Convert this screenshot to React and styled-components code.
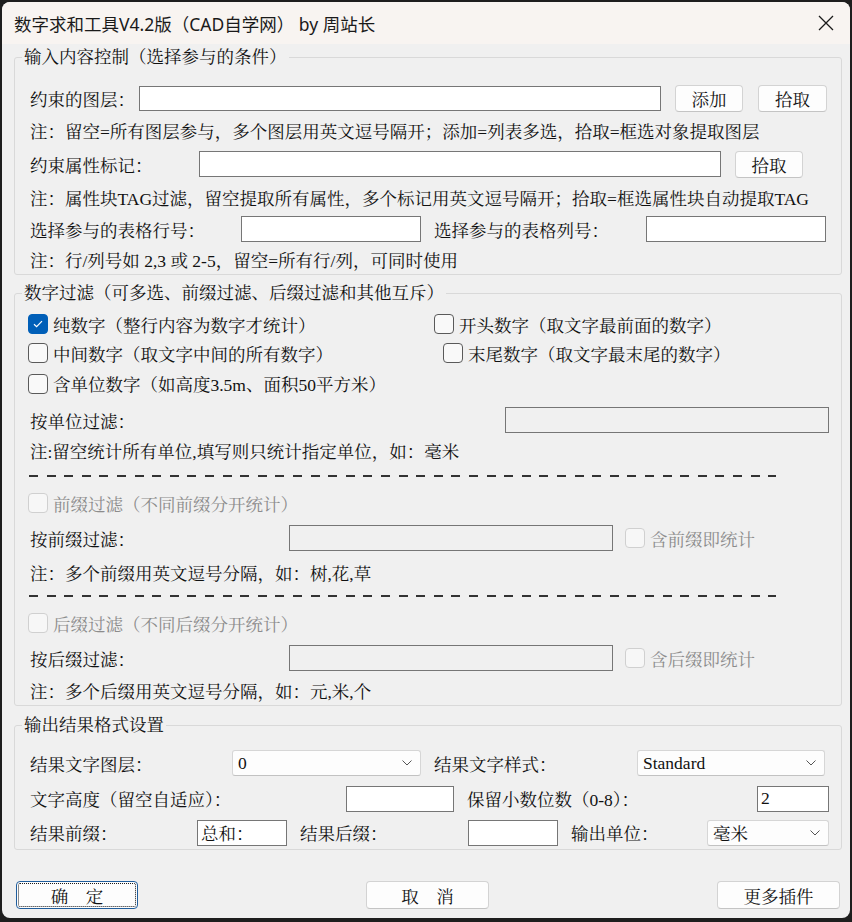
import React from 'react';
import styled, { createGlobalStyle, css } from 'styled-components';

const BODY_FONT = `"Liberation Serif", "Noto Serif CJK SC", "Noto Sans CJK SC", serif`;
const TITLE_FONT = `"Noto Sans", "Noto Sans CJK SC", sans-serif`;

const GlobalStyle = createGlobalStyle`
  html, body { margin: 0; padding: 0; background: #1e1e1e; }
  body { width: 852px; height: 922px; overflow: hidden; }
  *, *::before, *::after { box-sizing: border-box; }
`;

const Window = styled.div`
  margin: 2px;
  width: 848px;
  height: 916px;
  background: #f0f0f0;
  border-radius: 8px;
  overflow: hidden;
  display: flex;
  flex-direction: column;
  font-family: ${BODY_FONT};
  font-size: 17.5px;
  color: #111;
`;

const TitleBar = styled.div`
  flex: 0 0 42px;
  display: flex;
  align-items: center;
  justify-content: space-between;
  padding-left: 12px;
  background: #f8f4f1;
  font-family: ${TITLE_FONT};
  font-size: 17.5px;
  color: #1a1a1a;
`;

const CloseBtn = styled.div`
  width: 48px;
  height: 42px;
  display: flex;
  align-items: center;
  justify-content: center;
`;

const Group = styled.fieldset`
  margin: ${p => p.$mt}px 0 0 12px;
  width: 828px;
  min-width: 0;
  padding: 0 0 ${p => p.$pb}px 15px;
  border: 1px solid #d9d9d9;
  border-radius: 3px;
  display: flex;
  flex-direction: column;
`;

const Legend = styled.legend`
  margin-left: -8px;
  padding: 0 2px;
  line-height: 24px;
  color: #111;
`;

const Row = styled.div`
  display: flex;
  align-items: center;
  height: ${p => p.$h}px;
  margin-top: ${p => p.$mt || 0}px;
  margin-left: ${p => p.$ml || 0}px;
  white-space: nowrap;
`;

const Label = styled.span`
  flex: 0 0 ${p => (p.$w ? `${p.$w}px` : 'auto')};
  margin-left: ${p => p.$ml || 0}px;
  white-space: nowrap;
  color: ${p => (p.$disabled ? '#8c8c8c' : '#111')};
`;

const TextBox = styled.input`
  flex: 0 0 ${p => p.$w}px;
  width: ${p => p.$w}px;
  height: ${p => p.$h || 26}px;
  margin: 0;
  border: 1px solid #767676;
  border-radius: 0;
  background: ${p => (p.$muted ? '#f0f0f0' : '#fff')};
  font: inherit;
  padding: 0 3px;
  color: #111;
  outline: none;
`;

const Btn = styled.button`
  flex: 0 0 ${p => p.$w}px;
  width: ${p => p.$w}px;
  height: ${p => p.$h || 27}px;
  margin: 0 0 0 ${p => p.$ml || 0}px;
  padding: 0;
  background: #fdfdfd;
  border: 1px solid #d3d3d3;
  border-bottom-color: #c4c4c4;
  border-radius: 4px;
  font: inherit;
  color: #111;
  ${p =>
    p.$primary &&
    css`
      border-color: #1f5d9c;
      outline: 1px dotted #1a1a1a;
      outline-offset: -3px;
    `}
`;

const Combo = styled.div`
  flex: 0 0 ${p => p.$w}px;
  width: ${p => p.$w}px;
  height: 26px;
  margin-left: ${p => p.$ml || 0}px;
  display: flex;
  align-items: center;
  justify-content: space-between;
  padding: 0 8px 0 5px;
  background: #fdfdfd;
  border: 1px solid #d6d6d6;
  border-bottom-color: #c2c2c2;
  border-radius: 3px;
  color: #111;
`;

const CheckItem = styled.label`
  display: flex;
  align-items: center;
  gap: 5px;
  flex: 0 0 ${p => (p.$w ? `${p.$w}px` : 'auto')};
  margin-left: ${p => p.$ml || 0}px;
  color: ${p => (p.$disabled ? '#8c8c8c' : '#111')};
`;

const Box = styled.span`
  flex: 0 0 20px;
  width: 20px;
  height: 20px;
  border-radius: 4px;
  border: 1px solid
    ${p => (p.$checked ? '#005fb8' : p.$disabled ? '#d0d0d0' : '#5a5a5a')};
  background: ${p => (p.$checked ? '#005fb8' : p.$disabled ? '#f7f7f7' : '#f9f9f9')};
  display: flex;
  align-items: center;
  justify-content: center;
`;

const Dashes = styled.div`
  width: 747px;
  height: 2px;
  margin-left: -1px;
  background: repeating-linear-gradient(to right, #333 0 9px, transparent 9px 17.6px);
`;

const ButtonBar = styled.div`
  display: flex;
  justify-content: space-between;
  margin: 31px 10px 0 14px;
`;

const Check = ({ checked, disabled, children, w, ml }) => (
  <CheckItem $disabled={disabled} $w={w} $ml={ml}>
    <Box $checked={checked} $disabled={disabled}>
      {checked && (
        <svg width="12" height="10" viewBox="0 0 12 10">
          <polyline points="2,5.2 4.6,7.6 10,2.2" fill="none" stroke="#fff" strokeWidth="1.2" />
        </svg>
      )}
    </Box>
    <span>{children}</span>
  </CheckItem>
);

const Select = ({ w, ml, value }) => (
  <Combo $w={w} $ml={ml}>
    <span>{value}</span>
    <svg width="10" height="6" viewBox="0 0 10 6">
      <path d="M0.5 0.5 L5 5 L9.5 0.5" fill="none" stroke="#555" strokeWidth="1" />
    </svg>
  </Combo>
);

export default function App() {
  return (
    <>
      <GlobalStyle />
      <Window>
        <TitleBar>
          <span>数字求和工具V4.2版（CAD自学网） by 周站长</span>
          <CloseBtn>
            <svg width="16" height="16" viewBox="0 0 16 16">
              <path d="M1 1 L15 15 M15 1 L1 15" stroke="#1a1a1a" strokeWidth="1.3" />
            </svg>
          </CloseBtn>
        </TitleBar>

        <Group $mt={1} $pb={2}>
          <Legend>输入内容控制（选择参与的条件）</Legend>
          <Row $h={32} $mt={13}>
            <Label $w={109}>约束的图层：</Label>
            <TextBox $w={522} $h={25} readOnly />
            <Btn $w={68} $ml={14}>添加</Btn>
            <Btn $w={69} $ml={15}>拾取</Btn>
          </Row>
          <Row $h={32}>注：留空=所有图层参与，多个图层用英文逗号隔开；添加=列表多选，拾取=框选对象提取图层</Row>
          <Row $h={36}>
            <Label $w={169}>约束属性标记：</Label>
            <TextBox $w={522} readOnly />
            <Btn $w={68} $ml={14}>拾取</Btn>
          </Row>
          <Row $h={30}>注：属性块TAG过滤，留空提取所有属性，多个标记用英文逗号隔开；拾取=框选属性块自动提取TAG</Row>
          <Row $h={34}>
            <Label $w={211}>选择参与的表格行号：</Label>
            <TextBox $w={180} readOnly />
            <Label $w={212} $ml={13}>选择参与的表格列号：</Label>
            <TextBox $w={180} readOnly />
          </Row>
          <Row $h={26}>注：行/列号如 2,3 或 2-5，留空=所有行/列，可同时使用</Row>
        </Group>

        <Group $mt={6} $pb={5}>
          <Legend>数字过滤（可多选、前缀过滤、后缀过滤和其他互斥）</Legend>
          <Row $h={28} $mt={5} $ml={-2}>
            <Check checked w={406}>纯数字（整行内容为数字才统计）</Check>
            <Check>开头数字（取文字最前面的数字）</Check>
          </Row>
          <Row $h={30} $ml={-2}>
            <Check w={415}>中间数字（取文字中间的所有数字）</Check>
            <Check>末尾数字（取文字最末尾的数字）</Check>
          </Row>
          <Row $h={31} $ml={-2}>
            <Check>含单位数字（如高度3.5m、面积50平方米）</Check>
          </Row>
          <Row $h={42}>
            <Label $w={475}>按单位过滤：</Label>
            <TextBox $w={324} $muted readOnly />
          </Row>
          <Row $h={19}>注:留空统计所有单位,填写则只统计指定单位，如：毫米</Row>
          <Row $h={32}>
            <Dashes />
          </Row>
          <Row $h={22} $ml={-2}>
            <Check disabled>前缀过滤（不同前缀分开统计）</Check>
          </Row>
          <Row $h={48}>
            <Label $w={259}>按前缀过滤：</Label>
            <TextBox $w={324} $muted readOnly />
            <Check disabled ml={12}>含前缀即统计</Check>
          </Row>
          <Row $h={20}>注：多个前缀用英文逗号分隔，如：树,花,草</Row>
          <Row $h={28}>
            <Dashes />
          </Row>
          <Row $h={26} $ml={-2}>
            <Check disabled>后缀过滤（不同后缀分开统计）</Check>
          </Row>
          <Row $h={44}>
            <Label $w={259}>按后缀过滤：</Label>
            <TextBox $w={324} $muted readOnly />
            <Check disabled ml={12}>含后缀即统计</Check>
          </Row>
          <Row $h={20}>注：多个后缀用英文逗号分隔，如：元,米,个</Row>
        </Group>

        <Group $mt={7} $pb={0}>
          <Legend>输出结果格式设置</Legend>
          <Row $h={36} $mt={8}>
            <Label $w={202}>结果文字图层：</Label>
            <Select w={189} value="0" />
            <Label $w={203} $ml={13}>结果文字样式：</Label>
            <Select w={188} value="Standard" />
          </Row>
          <Row $h={35}>
            <Label $w={316}>文字高度（留空自适应）：</Label>
            <TextBox $w={108} readOnly />
            <Label $w={290} $ml={13}>保留小数位数（0-8）：</Label>
            <TextBox $w={72} readOnly defaultValue="2" />
          </Row>
          <Row $h={33}>
            <Label $w={167}>结果前缀：</Label>
            <TextBox $w={90} readOnly defaultValue="总和：" />
            <Label $w={168} $ml={13}>结果后缀：</Label>
            <TextBox $w={90} readOnly />
            <Label $w={136} $ml={13}>输出单位：</Label>
            <Select w={122} value="毫米" />
          </Row>
        </Group>

        <ButtonBar>
          <Btn $w={122} $h={28} $primary>确　定</Btn>
          <Btn $w={123} $h={28}>取　消</Btn>
          <Btn $w={123} $h={28}>更多插件</Btn>
        </ButtonBar>
      </Window>
    </>
  );
}
